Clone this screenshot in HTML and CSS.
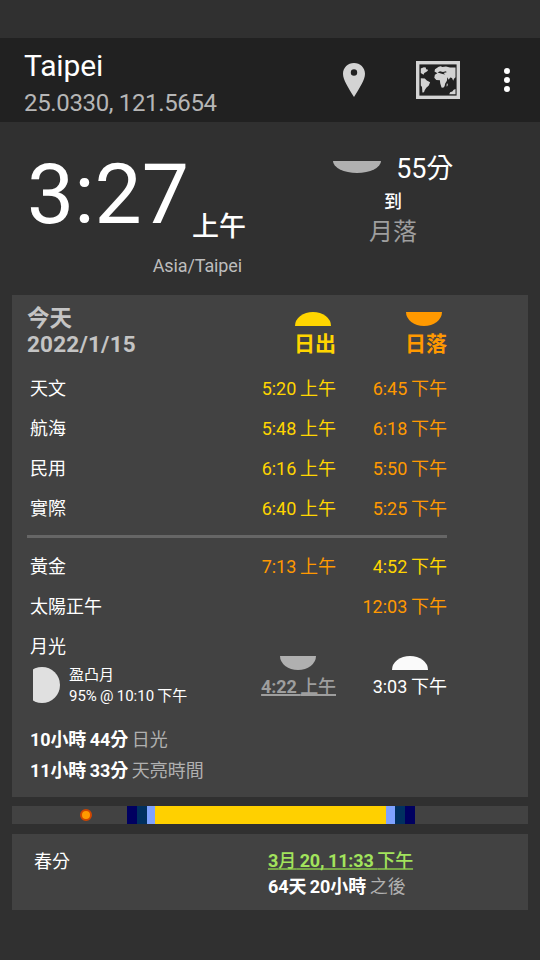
FILE: index.html
```html
<!DOCTYPE html>
<html lang="zh-Hant">
<head>
<meta charset="utf-8">
<title>Taipei</title>
<link rel="stylesheet" href="styles.css">
</head>
<body>
<header class="bar">
  <div class="place">
    <div class="city">Taipei</div>
    <div class="coords">25.0330, 121.5654</div>
  </div>
  <svg class="pin" viewBox="0 0 22 34" width="22" height="34"><path fill="#d3d3d3" fill-rule="evenodd" d="M11 0C4.900 0 0 4.700 0 10.800C0 17 5.500 25 11 34C16.500 25 22 17 22 10.800C22 4.700 17.100 0 11 0ZM11 6.300A3.200 3.200 0 1 1 11 12.700A3.200 3.200 0 1 1 11 6.300Z"/></svg>
  <svg class="map" viewBox="0 0 44 38" width="44" height="38"><rect x="1.700" y="1.700" width="40.600" height="34.600" fill="none" stroke="#d3d3d3" stroke-width="3.400"/><g fill="#d3d3d3"><path d="M4.800 7.500l3-1.300 2 .3.300 2 2 1-1.600 1.300L8.300 12l-.8 1.800L4.800 12zM10.300 8l1.600.8-.8 1zM4.800 17.300l4 .2 2 2 3.300 1.700-1.300 3.300-2.500 2.300-1.600 2.400-.7 2-1.600.3-.4-5.500-1.200-1.500z"/><path d="M18.500 10.500l.5-2.200 3.700-2.600 2-.4 1.600.8 3.700-.6 4 1 5.500-.1v9.800l-1.500 1.600-.8 2-1.200-2.700-1.800-.6-1.500 2.300-1.400-2.600-.4 3.600-1.700 2.800-.6 2.700-1.400 1.400-1.700-.3-1.300-4.200-.3-3-3.600-.3-2-2.200.6-2.900 2.500-1.600z"/><path d="M30.800 22.500l1 .3-.3 2.200-1 .4zM39.500 28v5.200h-6.200l.8-2 2.200-.8 1.400-1.700z"/></g><path d="M21.500 11.600l2.500-1.300 3 .7 3-.8.600 1-3 .8 1.600 1.500-2.700-.6z" fill="#212121"/></svg>
  <svg class="more" viewBox="0 0 6 24" width="6" height="24" fill="#fff"><circle cx="3" cy="3" r="3"/><circle cx="3" cy="12" r="3"/><circle cx="3" cy="21" r="3"/></svg>
</header>

<section class="now">
  <div class="clock">
    <div class="time"><span class="digits">3:27</span><span class="ampm">上午</span></div>
    <div class="zone">Asia/Taipei</div>
  </div>
  <div class="next">
    <div class="remain"><i class="half down big silver"></i><span>55分</span></div>
    <div class="until">到</div>
    <div class="event">月落</div>
  </div>
</section>

<main class="card day">
  <div class="head">
    <div class="date">今天<br><span>2022/1/15</span></div>
    <div class="col yellow"><i class="half up"></i><b>日出</b></div>
    <div class="col orange"><i class="half down"></i><b>日落</b></div>
  </div>
  <div class="row"><span>天文</span><span class="yellow">5:20 上午</span><span class="orange">6:45 下午</span></div>
  <div class="row"><span>航海</span><span class="yellow">5:48 上午</span><span class="orange">6:18 下午</span></div>
  <div class="row"><span>民用</span><span class="yellow">6:16 上午</span><span class="orange">5:50 下午</span></div>
  <div class="row"><span>實際</span><span class="yellow">6:40 上午</span><span class="orange">5:25 下午</span></div>
  <div class="rule"></div>
  <div class="row"><span>黃金</span><span class="orange">7:13 上午</span><span class="yellow">4:52 下午</span></div>
  <div class="row"><span>太陽正午</span><span></span><span class="orange">12:03 下午</span></div>
  <div class="moon">
    <div class="phase">
      <div class="label">月光</div>
      <div class="detail">
        <svg viewBox="0 0 27 36" width="27" height="36"><circle cx="9" cy="18" r="18" fill="#e0e0e0"/></svg>
        <div>盈凸月<br>95% @ 10:10 下午</div>
      </div>
    </div>
    <div class="mcol silver"><i class="half down"></i><span class="set">4:22 <span class="mid">上午</span></span></div>
    <div class="mcol rise"><i class="half up"></i><span>3:03 下午</span></div>
  </div>
  <div class="length"><b>10小時 44分</b> 日光</div>
  <div class="length"><b>11小時 33分</b> 天亮時間</div>
</main>

<div class="light">
  <i class="night am"></i><i class="astro"></i><i class="naut"></i><i class="civil"></i><i class="sun"></i><i class="civil late"></i><i class="naut"></i><i class="astro"></i>
  <i class="dot"></i>
</div>

<section class="card season">
  <div class="name">春分</div>
  <div class="when"><div><b class="link">3<span class="mid">月</span> 20, 11:33 <span class="mid">下午</span></b></div><div class="after"><b>64天 20小時</b> 之後</div></div>
</section>
</body>
</html>
```
FILE: styles.css
```css
* { box-sizing: border-box; }
body {
  margin: 0;
  height: 960px;
  padding-top: 38px;
  background: #303030;
  color: #fff;
  font: 18px/26px Roboto, "Noto Sans CJK TC", sans-serif;
  word-spacing: -.8px;
  overflow: hidden;
}
i { display: block; flex: none; }
svg { display: block; flex: none; }
b { font-weight: 700; letter-spacing: -.12px; }

.bar { height: 84px; background: #212121; display: flex; align-items: center; padding: 0 30px 0 24px; }
.place { flex: none; width: 319px; white-space: nowrap; padding-top: 8px; }
.city { font-size: 30px; line-height: 38px; letter-spacing: -.1px; }
.coords { font-size: 24px; line-height: 36px; letter-spacing: -.35px; word-spacing: 0; color: #b6b6b6; }
.map { margin-left: 51px; }
.more { margin-left: 44px; }

.now { height: 173px; display: flex; }
.clock { width: 246px; padding: 23px 0 0 27px; white-space: nowrap; }
.time { display: flex; height: 98px; }
.digits { width: 166px; font-size: 84px; line-height: 100px; }
.ampm { font-size: 27px; font-weight: 500; line-height: 26px; padding-top: 69px; }
.zone { text-align: right; padding: 10px 4px 0 0; color: #bdbdbd; letter-spacing: -.12px; }
.next { width: 207px; padding-top: 28px; display: flex; flex-direction: column; }
.remain { display: flex; justify-content: flex-end; font-size: 27px; line-height: 38px; height: 36px; letter-spacing: -.2px; }
.remain i { margin: 11px 15px 0 0; }
.until { line-height: 32px; padding-left: 138px; font-weight: 500; }
.event { font-size: 24px; line-height: 28px; padding-left: 123px; color: #9e9e9e; }

.half { width: 36px; height: 14px; background: currentColor; }
.up { border-radius: 18px 18px 0 0 / 14px 14px 0 0; }
.down { border-radius: 0 0 18px 18px / 0 0 14px 14px; }
.big { width: 48px; height: 12px; border-radius: 0 0 24px 24px / 0 0 12px 12px; }
.yellow { color: #ffd500; }
.orange { color: #ff9900; }
.silver { color: #b0b0b0; }

.card { margin: 0 12px; background: #424242; }
.day { height: 502px; padding: 10px 81px 0 15px; }
.head { display: grid; grid-template-columns: 1fr 111px 111px; height: 64px; }
.date { font-size: 22.5px; font-weight: 700; line-height: 26px; color: #c4c4c4; }
.date span { letter-spacing: .2px; }
.col { display: flex; flex-direction: column; align-items: flex-end; padding-top: 7px; }
.col .half { margin-right: 5px; }
.col b { font-size: 21px; font-weight: 700; line-height: 36px; letter-spacing: 0; }
.row { display: grid; grid-template-columns: 1fr 111px 111px; line-height: 40px; height: 40px; padding-left: 3px; }
.row span + span { text-align: right; }
.rule { height: 3px; background: #666; margin: 6px 0 9px; }
.moon { display: grid; grid-template-columns: 1fr 111px 111px; height: 97px; }
.phase { padding-left: 3px; }
.label { line-height: 40px; }
.detail { display: flex; gap: 9px; padding-left: 3px; font-size: 15px; line-height: 21px; white-space: nowrap; }
.detail div { margin-top: -2px; word-spacing: -.5px; }
.mcol { display: flex; flex-direction: column; align-items: flex-end; padding-top: 29px; line-height: 34px; }
.mcol .half { margin-right: 20px; }
.rise .half { margin-right: 19px; color: #fafafa; }
.set { font-weight: 700; color: #9e9e9e; text-decoration: underline 2px; text-decoration-skip-ink: none; letter-spacing: -.12px; }
.mid { font-weight: 500; }
.length { line-height: 31px; padding-left: 3px; color: #b0b0b0; }
.length b, .after b { color: #fff; }

.light { margin: 9px 12px 10px; height: 18px; background: #424242; display: flex; position: relative; }
.am { width: 115px; }
.astro { width: 10px; background: #000060; }
.naut { width: 10px; background: #003060; }
.civil { width: 8px; background: #7fa2ff; }
.late { width: 9px; }
.sun { width: 231px; background: #ffd000; }
.dot { position: absolute; left: 68px; top: 3px; width: 12px; height: 12px; border-radius: 50%; background: #ff9900; border: 2px solid #d04600; }

.season { height: 76px; display: flex; padding: 14px 0 0 22px; }
.name { width: 234px; padding-top: 1px; }
.after { color: #b0b0b0; }
.link { color: #a2e45c; text-decoration: underline 2px #78a648; text-decoration-skip-ink: none; }
```
